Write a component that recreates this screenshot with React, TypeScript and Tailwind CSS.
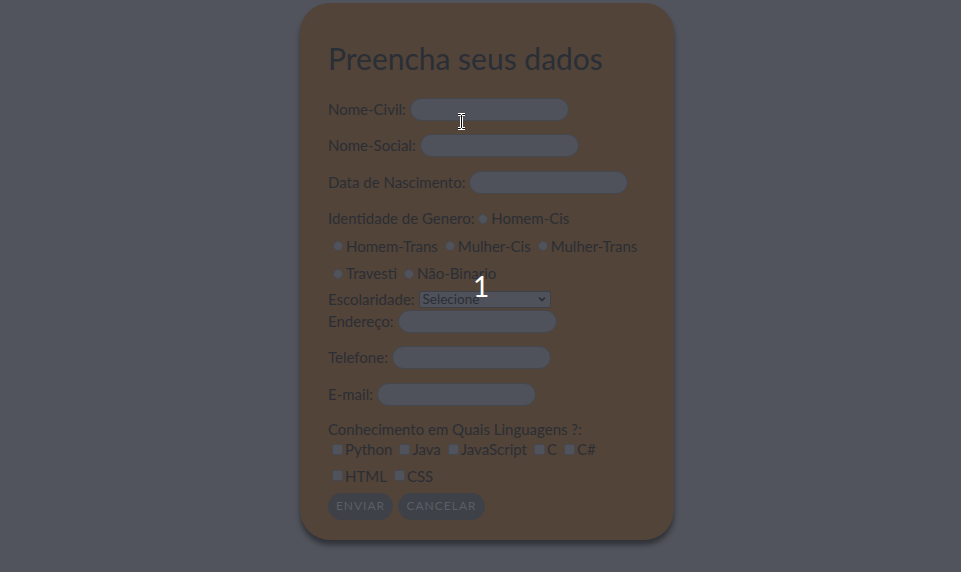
import React from 'react'

const GENEROS = ['Homem-Trans', 'Mulher-Cis', 'Mulher-Trans']
const LINGUAGENS_1 = ['Python', 'Java', 'JavaScript', 'C', 'C#']
const LINGUAGENS_2 = ['HTML', 'CSS']

const font = { fontFamily: 'Lato, "Noto Sans", sans-serif' }

function Campo({ label, width }: { label: string; width: string }) {
  return (
    <div className="flex items-center gap-[4px] h-[24px] mb-[12.5px]">
      <span>{label}</span>
      <span className={`${width} h-[23px] rounded-full bg-[#4f525a] border border-[#44474e]`} />
    </div>
  )
}

function Radio({ label }: { label: string }) {
  return (
    <span className="inline-flex items-center gap-[3px] mr-[7px]">
      <span className="w-[10px] h-[10px] rounded-full bg-[#50535b] border border-[#46494f]" />
      {label}
    </span>
  )
}

function Check({ label }: { label: string }) {
  return (
    <span className="inline-flex items-center gap-[2px] mr-[7px]">
      <span className="w-[11px] h-[11px] rounded-[2px] bg-[#50535b] border border-[#46494f]" />
      {label}
    </span>
  )
}

export default function App() {
  return (
    <div className="relative min-h-[572px] w-full bg-[#51545c] flex justify-center pl-[13px] pt-[3px] text-[#2b2e35] text-[15px]" style={font}>
      <div className="w-[374px] h-[537px] bg-[#524439] rounded-[30px] shadow-[0_5px_5px_rgba(40,42,48,0.8)] px-[28px] pt-[37px]">
        <h1 className="text-[30px] leading-[36px] mb-[21px] text-[#2a2e36]">Preencha seus dados</h1>

        <Campo label="Nome-Civil:" width="w-[159px]" />
        <Campo label="Nome-Social:" width="w-[159px]" />
        <Campo label="Data de Nascimento:" width="w-[159px]" />

        <div className="leading-[27px] -mt-[2px]">
          <div>
            Identidade de Genero: <Radio label="Homem-Cis" />
          </div>
          <div className="pl-[5px]">
            {GENEROS.map(g => <Radio key={g} label={g} />)}
          </div>
          <div className="pl-[5px]">
            <Radio label="Travesti" />
            <Radio label="Não-Binario" />
          </div>
        </div>

        <div className="flex items-center gap-[4px] h-[20px] mt-[2px]">
          <span>Escolaridade:</span>
          <span className="w-[132px] h-[17px] bg-[#4f525a] border border-[#3d4046] rounded-[2px] flex items-center justify-between px-[3px] text-[13.5px]">
            Selecione
            <svg width="10" height="10" viewBox="0 0 10 10">
              <path d="M2 3.5 L5 6.5 L8 3.5" stroke="#2b2e35" strokeWidth="1.6" fill="none" />
            </svg>
          </span>
        </div>
        <Campo label="Endereço:" width="w-[159px]" />
        <Campo label="Telefone:" width="w-[159px]" />
        <Campo label="E-mail:" width="w-[159px]" />

        <div className="leading-[20px]">Conhecimento em Quais Linguagens ?:</div>
        <div className="leading-[26px] pl-[4px] -mt-[3px]">
          <div>{LINGUAGENS_1.map(l => <Check key={l} label={l} />)}</div>
          <div>{LINGUAGENS_2.map(l => <Check key={l} label={l} />)}</div>
        </div>

        <div className="flex gap-[5px] mt-[4px]">
          <button className="h-[27px] w-[65px] rounded-full bg-[#3e4148] text-[#5b5e65] text-[12px] tracking-[1px]">ENVIAR</button>
          <button className="h-[27px] w-[87px] rounded-full bg-[#3e4148] text-[#5b5e65] text-[12px] tracking-[1px]">CANCELAR</button>
        </div>
      </div>

      <span className="absolute left-[473px] top-[268px] text-white text-[28px] leading-[36px]">1</span>

      {/* text cursor */}
      <svg className="absolute left-[457px] top-[113px]" width="9" height="17" viewBox="0 0 9 17">
        <path d="M1 1.5 H3.5 L4.5 2.5 L5.5 1.5 H8 M4.5 2.5 V14.5 M1 15.5 H3.5 L4.5 14.5 L5.5 15.5 H8" stroke="#fff" strokeWidth="3" fill="none" />
        <path d="M1 1.5 H3.5 L4.5 2.5 L5.5 1.5 H8 M4.5 2.5 V14.5 M1 15.5 H3.5 L4.5 14.5 L5.5 15.5 H8" stroke="#000" strokeWidth="1" fill="none" />
      </svg>
    </div>
  )
}
